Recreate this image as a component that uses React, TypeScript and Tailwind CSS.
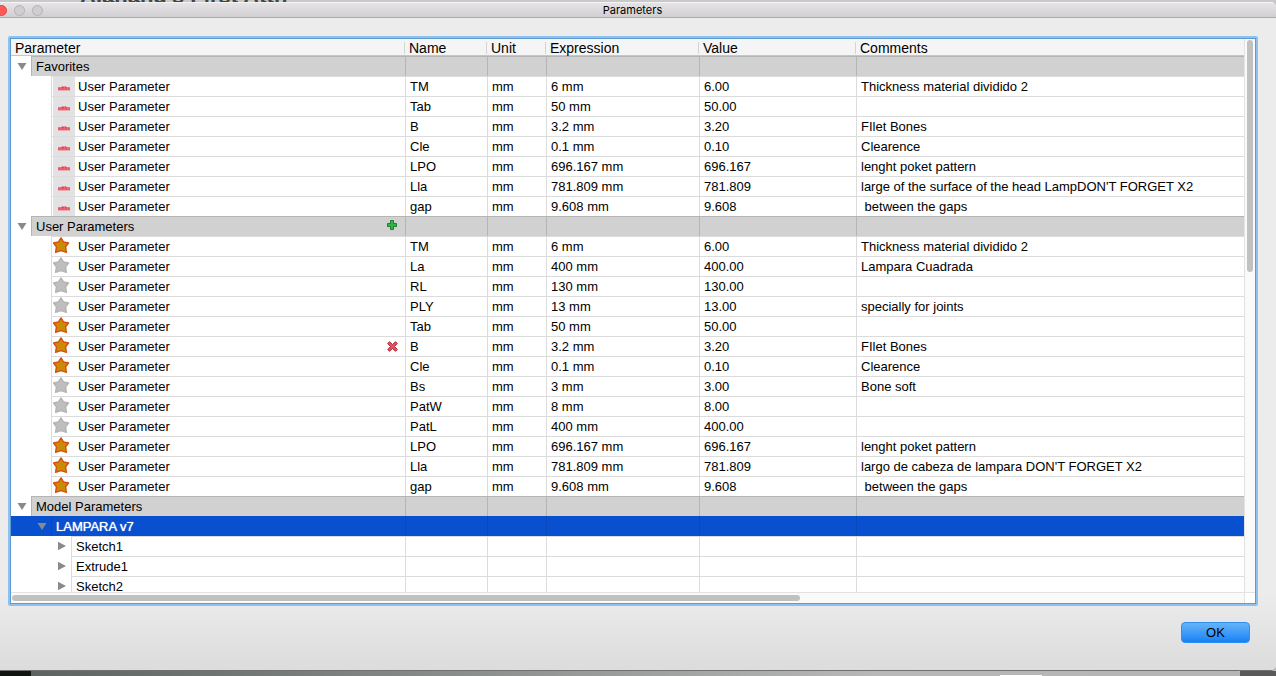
import React from "react";
import clsx from "clsx";

type Row = { name: string; expr: string; value: string; comment?: string; starred?: boolean; removable?: boolean };

const favorites: Row[] = [
  { name: "TM", expr: "6 mm", value: "6.00", comment: "Thickness material dividido 2" },
  { name: "Tab", expr: "50 mm", value: "50.00" },
  { name: "B", expr: "3.2 mm", value: "3.20", comment: "FIlet Bones" },
  { name: "Cle", expr: "0.1 mm", value: "0.10", comment: "Clearence" },
  { name: "LPO", expr: "696.167 mm", value: "696.167", comment: "lenght poket pattern" },
  { name: "Lla", expr: "781.809 mm", value: "781.809", comment: "large of the surface of the head LampDON'T FORGET X2" },
  { name: "gap", expr: "9.608 mm", value: "9.608", comment: " between the gaps" },
];

const userParams: Row[] = [
  { name: "TM", expr: "6 mm", value: "6.00", comment: "Thickness material dividido 2", starred: true },
  { name: "La", expr: "400 mm", value: "400.00", comment: "Lampara Cuadrada" },
  { name: "RL", expr: "130 mm", value: "130.00" },
  { name: "PLY", expr: "13 mm", value: "13.00", comment: "specially for joints" },
  { name: "Tab", expr: "50 mm", value: "50.00", starred: true },
  { name: "B", expr: "3.2 mm", value: "3.20", comment: "FIlet Bones", starred: true, removable: true },
  { name: "Cle", expr: "0.1 mm", value: "0.10", comment: "Clearence", starred: true },
  { name: "Bs", expr: "3 mm", value: "3.00", comment: "Bone soft" },
  { name: "PatW", expr: "8 mm", value: "8.00" },
  { name: "PatL", expr: "400 mm", value: "400.00" },
  { name: "LPO", expr: "696.167 mm", value: "696.167", comment: "lenght poket pattern", starred: true },
  { name: "Lla", expr: "781.809 mm", value: "781.809", comment: "largo de cabeza de lampara DON'T FORGET X2", starred: true },
  { name: "gap", expr: "9.608 mm", value: "9.608", comment: " between the gaps", starred: true },
];

const features = ["Sketch1", "Extrude1", "Sketch2"];
const headings = ["Parameter", "Name", "Unit", "Expression", "Value", "Comments"];

function Star({ on }: { on?: boolean }) {
  return (
    <svg width="17" height="17" viewBox="0 0 17 17" className="block">
      <path
        d="M8 .9 10.6 5 15.6 6 12.6 9.8 13.4 15.3 8 13.7 2.6 15.3 3.4 9.8 .6 6 5.4 5Z"
        fill={on ? "#cb8a06" : "#bebebe"}
        stroke={on ? "#d4500f" : "#b4b4b4"}
        strokeWidth="1.4"
        strokeLinejoin="round"
      />
    </svg>
  );
}

function Dash() {
  return (
    <svg width="12" height="5" viewBox="0 0 12 5" className="block">
      <path d="M0 1h3.5V.3h5V1H12v3.4H0Z" fill="#ee7480" />
      <path d="M0 3h12M3.5 1.6h5" stroke="#dc3f50" strokeWidth="1" strokeDasharray="2.5 .8" />
    </svg>
  );
}

function Plus() {
  return (
    <svg width="10" height="10" viewBox="0 0 10 10" className="block">
      <path d="M3.5.5h3v3h3v3h-3v3h-3v-3h-3v-3h3Z" fill="#35b34a" stroke="#1a8030" />
    </svg>
  );
}

function Cross() {
  return (
    <svg width="11" height="11" viewBox="0 0 11 11" className="block">
      <path
        d="M2.5.7 5.5 3.5 8.5.7 10.3 2.5 7.5 5.5 10.3 8.5 8.5 10.3 5.5 7.5 2.5 10.3.7 8.5 3.5 5.5.7 2.5Z"
        fill="#dc5664"
        stroke="#b62436"
      />
    </svg>
  );
}

function Triangle({ open }: { open?: boolean }) {
  return (
    <svg width="10" height="10" viewBox="0 0 10 10" className="block">
      <path d={open ? "M.5 2h9L5 9Z" : "M1 .8 9 5 1 9.2Z"} fill="#8a8a8a" />
    </svg>
  );
}

function Expander({ open, label, className }: { open?: boolean; label: string; className: string }) {
  return (
    <button
      type="button"
      aria-label={label}
      aria-expanded={!!open}
      className={clsx("flex h-full shrink-0 items-center justify-end pr-1", className)}
    >
      <Triangle open={open} />
    </button>
  );
}

function Cells({ values, tone }: { values: string[]; tone: string }) {
  return (
    <>
      {values.map((v, i) => (
        <td key={i} className={clsx("h-5 overflow-hidden border-t border-l p-0 pl-1 whitespace-pre", tone)}>
          {v}
        </td>
      ))}
    </>
  );
}

const blank = ["", "", "", "", ""];

function GroupRow({ label, addable }: { label: string; addable?: boolean }) {
  return (
    <tr>
      <td className="h-5 p-0">
        <div className="flex h-5">
          <Expander open label={label} className="w-5 pl-1" />
          <div className="flex flex-1 items-center justify-between border-t border-l border-[#b5b5b5] bg-[#d1d1d1] pr-2 pl-1">
            {label}
            {addable && (
              <button type="button" aria-label="Add" className="pb-[3px]">
                <Plus />
              </button>
            )}
          </div>
        </div>
      </td>
      <Cells values={blank} tone="border-[#b5b5b5] bg-[#d1d1d1]" />
    </tr>
  );
}

function ParameterRow({ row, favorite }: { row: Row; favorite?: boolean }) {
  return (
    <tr>
      <td className="h-5 p-0">
        <div className="flex h-5 pl-10">
          <div className="flex flex-1 items-center border-t border-l border-[#dcdcdc] pr-[7px] pl-px">
            <button
              type="button"
              aria-label={row.name}
              className={clsx(
                "flex h-full w-[22px] shrink-0",
                favorite ? "items-center justify-center bg-[#e2e2e2] pt-1" : "items-start",
              )}
            >
              {favorite ? <Dash /> : <Star on={row.starred} />}
            </button>
            <span className="flex-1 pl-[3px]">User Parameter</span>
            {row.removable && (
              <button type="button" aria-label="Delete" className="pb-px">
                <Cross />
              </button>
            )}
          </div>
        </div>
      </td>
      <Cells values={[row.name, "mm", row.expr, row.value, row.comment ?? ""]} tone="border-[#dcdcdc]" />
    </tr>
  );
}

export default function App() {
  return (
    <div className="flex h-screen flex-col overflow-hidden bg-[#c4c4c4] font-['Liberation_Sans',Arial,sans-serif] text-[13px] leading-4 text-black">
      <div className="flex h-[2px] shrink-0 items-end overflow-hidden bg-[#c9c9c9] pl-20">
        <span aria-hidden="true" className="-mb-1 text-[22px] leading-5 font-bold whitespace-nowrap text-[#444]">
          Alahand's First Attn
        </span>
      </div>

      <div className="flex min-h-0 flex-1 flex-col overflow-hidden rounded-r-[5px] border-b border-[#6f736f] bg-[#ececec]">
        <header className="flex h-4 shrink-0 items-center border-t border-b border-t-[#f4f4f4] border-b-[#adabad] bg-linear-to-b from-[#e6e4e6] to-[#d1cfd1]">
          <div className="-ml-1 flex w-11 shrink-0 gap-[7px]">
            <button type="button" aria-label="Close" className="size-[11px] shrink-0 rounded-full border border-[#e2453f] bg-[#fc5b57]" />
            <button type="button" aria-label="Minimize" className="size-[11px] shrink-0 rounded-full border border-[#b4b2b4] bg-[#d0ced0]" />
            <button type="button" aria-label="Zoom" className="size-[11px] shrink-0 rounded-full border border-[#b4b2b4] bg-[#d0ced0]" />
          </div>
          <h1 className="flex-1 pr-[51px] text-center font-[Inter,sans-serif] text-[11px] leading-3">Parameters</h1>
        </header>

        <main className="flex min-h-0 flex-1 flex-col bg-linear-to-b from-[#ececec] from-88% to-[#dcdcdc] pt-[18px] pr-[18px] pl-2">
          <div className="flex min-h-0 flex-1 flex-col rounded-[2px] border-2 border-[#8fc1ee]">
            <div className="flex min-h-0 flex-1 flex-col border border-[#5c9bd3] bg-white">
              <div className="flex min-h-0 flex-1">
                <div className="min-w-0 flex-1 overflow-hidden">
                  <table className="w-full table-fixed border-separate border-spacing-0">
                    <colgroup>
                      <col className="w-[394px]" />
                      <col className="w-[82px]" />
                      <col className="w-[59px]" />
                      <col className="w-[153px]" />
                      <col className="w-[157px]" />
                      <col />
                    </colgroup>
                    <thead>
                      <tr>
                        {headings.map((h) => (
                          <th key={h} scope="col" className="h-[17px] border-b border-[#c6c6c6] bg-[#f5f5f5] p-0 pb-px align-bottom text-left text-sm leading-4 font-normal">
                            <div className={clsx("flex h-3 items-center pl-1", h !== "Comments" && "border-r border-[#d4d4d4]")}>{h}</div>
                          </th>
                        ))}
                      </tr>
                    </thead>
                    <tbody>
                      <GroupRow label="Favorites" />
                      {favorites.map((r) => (
                        <ParameterRow key={r.name} row={r} favorite />
                      ))}
                      <GroupRow label="User Parameters" addable />
                      {userParams.map((r) => (
                        <ParameterRow key={r.name} row={r} />
                      ))}
                      <GroupRow label="Model Parameters" />
                      <tr className="bg-[#0850d0] text-white" aria-selected="true">
                        <td className="h-5 p-0">
                          <div className="flex h-5 items-center">
                            <Expander open label="LAMPARA v7" className="w-10" />
                            <div className="flex h-full flex-1 items-center border-t border-l border-t-[#0850d0] border-l-[#0a48b8] pl-1 [text-shadow:0_0_1px_#fff]">
                              LAMPARA v7
                            </div>
                          </div>
                        </td>
                        <Cells values={blank} tone="border-t-[#0850d0] border-l-[#0a48b8]" />
                      </tr>
                      {features.map((f) => (
                        <tr key={f}>
                          <td className="h-5 p-0">
                            <div className="flex h-5">
                              <Expander label={f} className="w-15" />
                              <div className="flex flex-1 items-center border-t border-l border-[#dcdcdc] pl-1">{f}</div>
                            </div>
                          </td>
                          <Cells values={blank} tone="border-[#dcdcdc]" />
                        </tr>
                      ))}
                    </tbody>
                  </table>
                </div>
                <div className="flex w-[11px] shrink-0 flex-col items-center border-l border-[#e2e2e2] bg-[#fafafa] pt-px">
                  <div className="h-[42%] w-[6px] rounded-full bg-[#c1c1c1]" />
                </div>
              </div>
              <div className="flex h-[11px] shrink-0 border-t border-[#e2e2e2]">
                <div className="flex flex-1 items-center bg-[#fafafa] pl-px">
                  <div className="h-[6px] w-[64%] rounded-full bg-[#c1c1c1]" />
                </div>
                <div className="w-[11px] border-l border-[#e2e2e2] bg-white" />
              </div>
            </div>
          </div>
          <div className="flex shrink-0 justify-end pt-4 pr-2 pb-[27px]">
            <button
              type="button"
              className="h-[21px] w-[69px] rounded-[4px] border border-[#2f8fea] bg-linear-to-b from-[#64b3f8] to-[#0a82f8] text-[13px] leading-4"
            >
              OK
            </button>
          </div>
        </main>
      </div>

      <footer className="flex h-[5px] shrink-0">
        <div className="w-[31px] bg-[#101512]" />
        <div className="flex flex-1 items-end justify-end rounded-tr-[3px] bg-linear-to-r from-[#5c6360] via-[#b8b8b8] via-70% to-[#b4b4b4] pr-[198px]">
          <div className="h-px w-[42px] bg-white" />
        </div>
        <div className="w-9 bg-[#5a5a5a]" />
      </footer>
    </div>
  );
}
